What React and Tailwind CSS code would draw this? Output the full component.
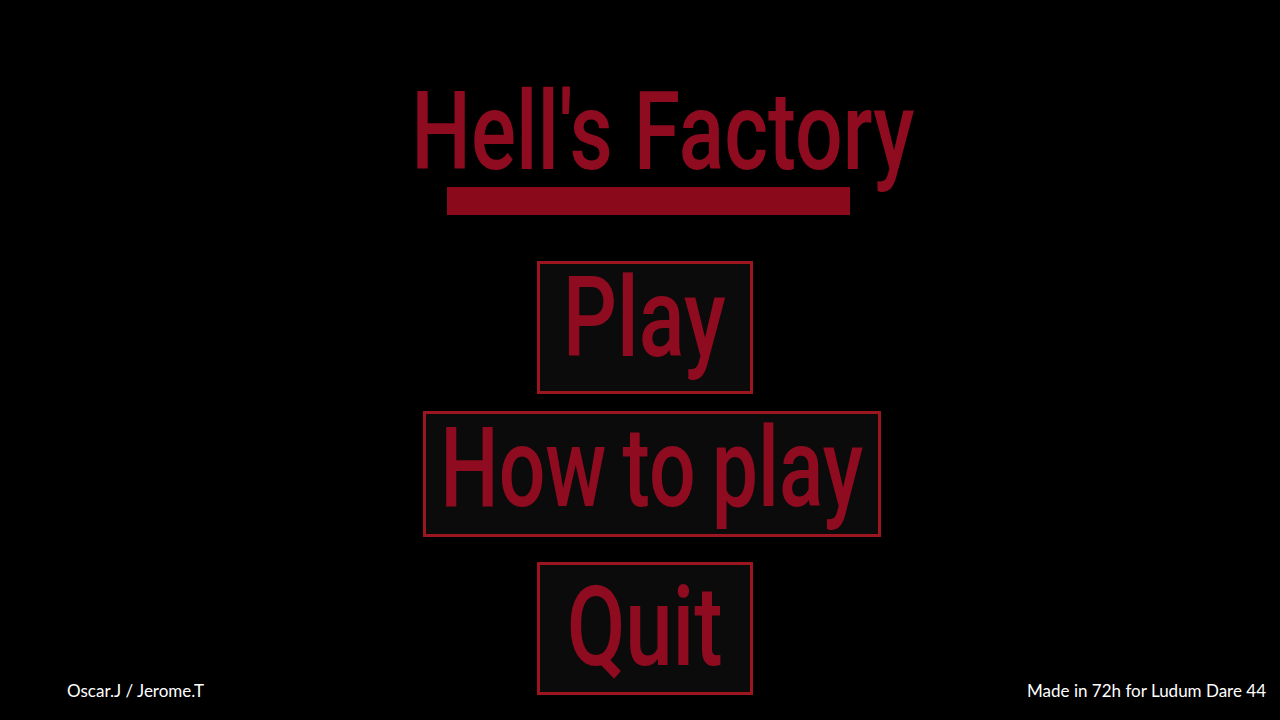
import React from 'react'

const display = { fontFamily: 'Roboto, "Liberation Sans", sans-serif' }
const body = { fontFamily: 'Lato, "Open Sans", sans-serif' }

function MenuButton({ label, box, shift, pad, squeeze = 'scale-x-[0.76]' }) {
    return (
        <button
            className={`flex items-center justify-center border-[3px] border-[#9c1620] bg-[#0b0b0b] ${box} ${shift}`}
        >
            <span
                className={`inline-block whitespace-nowrap text-[112px] font-medium leading-none text-[#8e0b20] ${squeeze} ${pad}`}
                style={display}
            >
                {label}
            </span>
        </button>
    )
}

export default function App() {
    return (
        <div className="flex h-[720px] w-full flex-col items-center overflow-hidden bg-black">
            <h1
                className="mt-[77px] ml-[46px] inline-block h-[110px] scale-x-[0.765] whitespace-nowrap text-[110px] font-medium leading-none text-[#8e0b20]"
                style={display}
            >
                Hell's Factory
            </h1>
            <div className="ml-[17px] h-[28px] w-[403px] bg-[#8a0a1c]" />

            <div className="mt-[46px] flex flex-col items-center">
                <MenuButton label="Play" box="h-[133px] w-[216px]" shift="ml-[9px]" pad="pb-[20px]" />
                <MenuButton
                    label="How to play"
                    box="mt-[17px] h-[126px] w-[458px]"
                    shift="ml-[23px]"
                    pad="pb-[12px] [word-spacing:-6px]"
                    squeeze="scale-x-[0.735]"
                />
            </div>

            <div className="mt-[25px] grid w-full grid-cols-[1fr_auto_1fr] items-end">
                <p className="-mb-[8px] pl-[67px] text-[17px] text-white" style={body}>
                    Oscar.J / Jerome.T
                </p>
                <MenuButton label="Quit" box="h-[133px] w-[216px]" shift="ml-[9px]" pad="pb-[4px]" />
                <p className="-mb-[8px] pr-[14px] text-right text-[17px] text-white" style={body}>
                    Made in 72h for Ludum Dare 44
                </p>
            </div>
        </div>
    )
}
